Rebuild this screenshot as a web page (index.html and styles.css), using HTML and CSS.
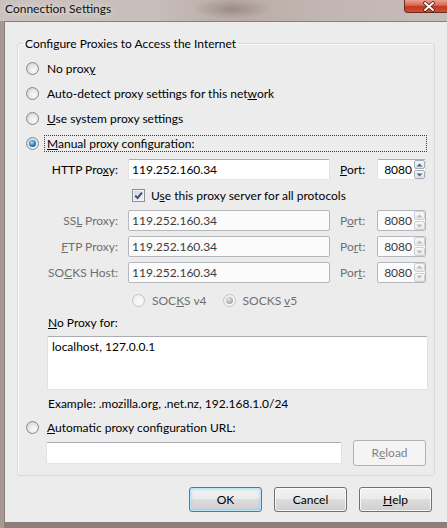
FILE: index.html
```html
<!DOCTYPE html>
<html lang="en">
<head>
<meta charset="utf-8">
<title>Connection Settings</title>
<link rel="stylesheet" href="styles.css">
</head>
<body>
<div class="window">
  <header class="titlebar">
    <span class="title">Connection Settings</span>
    <span class="close" aria-label="Close">
      <svg width="16" height="11" viewBox="0 0 16 11"><path d="M4 2 L12 9 M12 2 L4 9" stroke="#4a2018" stroke-width="3.6" stroke-linecap="round"/><path d="M4 2 L12 9 M12 2 L4 9" stroke="#ffffff" stroke-width="2" stroke-linecap="round"/></svg>
    </span>
  </header>
  <main class="client">
    <fieldset class="group">
      <legend class="legend">Configure Proxies to Access the Internet</legend>
      <div class="options">
        <div class="opt"><span class="radio"></span><span class="opt-label">No prox<u>y</u></span></div>
        <div class="opt"><span class="radio"></span><span class="opt-label">Auto-detect proxy settings for this net<u>w</u>ork</span></div>
        <div class="opt"><span class="radio"></span><span class="opt-label"><u>U</u>se system proxy settings</span></div>
        <div class="opt"><span class="radio on"></span><span class="opt-label focus"><u>M</u>anual proxy configuration:</span></div>
      </div>

      <div class="proxy-grid">
        <span class="field-label">HTTP Pro<u>x</u>y:</span>
        <span class="textbox">119.252.160.34</span>
        <span class="port-label"><u>P</u>ort:</span>
        <span class="portbox"><span class="port-val">8080</span><span class="spin"><span class="spin-btn"><svg width="7" height="4" viewBox="0 0 7 4"><path d="M0.5 3.5 L3.5 0.5 L6.5 3.5 Z" fill="#4f6283"/></svg></span><span class="spin-btn"><svg width="7" height="4" viewBox="0 0 7 4"><path d="M0.5 0.5 L3.5 3.5 L6.5 0.5 Z" fill="#4f6283"/></svg></span></span></span>

        <span class="check-row"><span class="checkbox"><svg width="11" height="11" viewBox="0 0 11 11"><path d="M2.2 5.6 L4.5 8 L9 2.6" fill="none" stroke="#3f4f86" stroke-width="2"/></svg></span><span class="check-label">U<u>s</u>e this proxy server for all protocols</span></span>

        <span class="field-label off">SS<u>L</u> Proxy:</span>
        <span class="textbox off">119.252.160.34</span>
        <span class="port-label off">P<u>o</u>rt:</span>
        <span class="portbox off"><span class="port-val">8080</span><span class="spin"><span class="spin-btn"><svg width="7" height="4" viewBox="0 0 7 4"><path d="M0.5 3.5 L3.5 0.5 L6.5 3.5 Z" fill="#b8bcc2"/></svg></span><span class="spin-btn"><svg width="7" height="4" viewBox="0 0 7 4"><path d="M0.5 0.5 L3.5 3.5 L6.5 0.5 Z" fill="#b8bcc2"/></svg></span></span></span>

        <span class="field-label off"><u>F</u>TP Proxy:</span>
        <span class="textbox off">119.252.160.34</span>
        <span class="port-label off">Po<u>r</u>t:</span>
        <span class="portbox off"><span class="port-val">8080</span><span class="spin"><span class="spin-btn"><svg width="7" height="4" viewBox="0 0 7 4"><path d="M0.5 3.5 L3.5 0.5 L6.5 3.5 Z" fill="#b8bcc2"/></svg></span><span class="spin-btn"><svg width="7" height="4" viewBox="0 0 7 4"><path d="M0.5 0.5 L3.5 3.5 L6.5 0.5 Z" fill="#b8bcc2"/></svg></span></span></span>

        <span class="field-label off">SO<u>C</u>KS Host:</span>
        <span class="textbox off">119.252.160.34</span>
        <span class="port-label off">Por<u>t</u>:</span>
        <span class="portbox off"><span class="port-val">8080</span><span class="spin"><span class="spin-btn"><svg width="7" height="4" viewBox="0 0 7 4"><path d="M0.5 3.5 L3.5 0.5 L6.5 3.5 Z" fill="#b8bcc2"/></svg></span><span class="spin-btn"><svg width="7" height="4" viewBox="0 0 7 4"><path d="M0.5 0.5 L3.5 3.5 L6.5 0.5 Z" fill="#b8bcc2"/></svg></span></span></span>
      </div>

      <div class="socks-ver">
        <span class="radio off"></span><span class="ver-label off">SOC<u>K</u>S v4</span>
        <span class="radio off on v5"></span><span class="ver-label off">SOCKS <u>v</u>5</span>
      </div>

      <div class="noproxy-label"><u>N</u>o Proxy for:</div>
      <div class="textarea">localhost, 127.0.0.1</div>
      <div class="example">Example: .mozilla.org, .net.nz, 192.168.1.0/24</div>

      <div class="opt auto"><span class="radio"></span><span class="opt-label"><u>A</u>utomatic proxy configuration URL:</span></div>
      <div class="url-row">
        <span class="textbox url"></span>
        <span class="btn disabled">R<u>e</u>load</span>
      </div>
    </fieldset>

    <div class="buttons">
      <span class="btn default">OK</span>
      <span class="btn">Cancel</span>
      <span class="btn"><u>H</u>elp</span>
    </div>
  </main>
</div>
</body>
</html>
```

FILE: styles.css
```css
html, body {
  margin: 0;
  padding: 0;
}

body {
  width: 447px;
  height: 528px;
  overflow: hidden;
  background: #8f7e78;
  font-family: Lato, "Liberation Sans", sans-serif;
  font-size: 12px;
  color: #000;
}

u {
  text-decoration-thickness: 1px;
  text-underline-offset: 1px;
}

.window {
  display: flex;
  flex-direction: column;
  height: 528px;
  background: linear-gradient(90deg, #a89893 0, #a89893 4px, transparent 4px);
}

.titlebar {
  height: 21px;
  flex: none;
  display: flex;
  align-items: flex-start;
  background:
    radial-gradient(ellipse 40px 10px at 232px 9px, rgba(120,100,95,0.45), rgba(120,100,95,0) 100%),
    linear-gradient(90deg, #cbc2bf 0%, #c7bdb9 35%, #b9aca7 52%, #c1b5b1 70%, #c8bcb8 100%);
}

.title {
  padding-left: 5px;
  line-height: 17px;
  font-size: 12px;
  color: #111;
  text-shadow: 0 0 6px rgba(255,255,255,0.9);
}

.close {
  margin-left: auto;
  width: 43px;
  height: 13px;
  box-sizing: border-box;
  border: 1px solid #6b2a20;
  border-top: none;
  border-right: none;
  border-radius: 0 0 0 4px;
  background: linear-gradient(#eba092 0%, #d8654f 45%, #c2381f 55%, #cf4e33 100%);
  display: flex;
  align-items: center;
  justify-content: center;
  padding-left: 6px;
}

.close svg {
  display: block;
}

.client {
  margin-left: 4px;
  height: 502px;
  box-sizing: border-box;
  border-top: 1px solid #85807e;
  border-left: 1px solid #85807e;
  border-bottom: 1px solid #85807e;
  background: #ececec;
  display: flex;
  flex-direction: column;
}

.group {
  margin: 14px 0 0 12px;
  padding: 0;
  width: 418px;
  height: 440px;
  box-sizing: border-box;
  border: 1px solid #d3dbe0;
  border-radius: 3px;
  box-shadow: inset 1px 1px 0 #fafafa;
  display: flex;
  flex-direction: column;
}

.legend {
  margin-left: 5px;
  padding: 0 2px;
  line-height: 15px;
  font-size: 12px;
  color: #000;
}

.options {
  padding-top: 5px;
}

.opt {
  height: 25px;
  display: flex;
  align-items: center;
  padding-left: 8px;
}

.opt.auto {
  margin-top: 4px;
}

.radio {
  flex: none;
  width: 13px;
  height: 13px;
  box-sizing: border-box;
  border-radius: 50%;
  border: 1px solid #86888a;
  background: radial-gradient(circle at 62% 65%, #fbfbfb 0, #e8e8e8 45%, #c7c8c9 100%);
  position: relative;
}

.radio.on::after {
  content: "";
  position: absolute;
  left: 2px;
  top: 2px;
  width: 7px;
  height: 7px;
  border-radius: 50%;
  background: radial-gradient(circle at 40% 35%, #b9e2fb 0, #4a9ad8 35%, #1b4f7e 85%);
}

.radio.off {
  border-color: #c3c5c7;
  background: radial-gradient(circle at 62% 65%, #fbfbfb 0, #f2f2f2 60%, #e2e2e2 100%);
}

.radio.off.on::after {
  background: radial-gradient(circle at 40% 35%, #e8e8e8 0, #b7b7b7 50%, #8f8f8f 100%);
}

.opt-label {
  margin-left: 5px;
  padding: 0 2px;
  line-height: 15px;
  border: 1px dotted transparent;
}

.opt-label.focus {
  flex: 1;
  border-color: #3a3a3a;
  margin-right: 7px;
}

.proxy-grid {
  margin: 3px 0 0 22px;
  display: grid;
  grid-template-columns: 78px 202px 27px 49px;
  grid-auto-rows: 21px;
  column-gap: 10px;
  row-gap: 4.7px;
  align-items: center;
}

.field-label {
  text-align: right;
  line-height: 15px;
  white-space: nowrap;
}

.port-label {
  line-height: 15px;
}

.off {
  color: #6f6f6f;
}

.textbox {
  height: 21px;
  box-sizing: border-box;
  border: 1px solid #dfe3e8;
  border-top-color: #abadb3;
  border-radius: 2px;
  background: #ffffff;
  padding: 0 3px;
  line-height: 19px;
  color: #000;
}

.textbox.off {
  border-color: #b4b8bc;
  background: #fbfbfb;
  color: #3c3c3c;
}

.portbox {
  height: 21px;
  box-sizing: border-box;
  border: 1px solid #dfe3e8;
  border-top-color: #abadb3;
  border-radius: 2px;
  background: #ffffff;
  display: flex;
  align-items: stretch;
  color: #000;
}

.portbox.off {
  border-color: #b4b8bc;
  background: #fbfbfb;
  color: #3c3c3c;
}

.port-val {
  flex: 1;
  text-align: right;
  line-height: 19px;
  padding-right: 2px;
}

.spin {
  width: 11px;
  display: flex;
  flex-direction: column;
  gap: 1px;
}

.spin-btn {
  flex: 1;
  box-sizing: border-box;
  border: 1px solid #a3adb9;
  border-radius: 2px;
  background: linear-gradient(#f6f6f6, #dde1e6);
  display: flex;
  align-items: center;
  justify-content: center;
}

.portbox.off .spin-btn {
  border-color: #cdd0d4;
  background: linear-gradient(#f8f8f8, #eaeaea);
}

.spin-btn svg {
  display: block;
}

.check-row {
  grid-column: 2 / 5;
  display: flex;
  align-items: center;
  padding-left: 4px;
}

.checkbox {
  flex: none;
  width: 13px;
  height: 13px;
  box-sizing: border-box;
  border: 1px solid #8e8f8f;
  background: linear-gradient(135deg, #cfd4dc, #f4f6f9);
  box-shadow: inset 0 0 0 1px #f4f4f4;
  display: flex;
  align-items: center;
  justify-content: center;
}

.checkbox svg {
  display: block;
}

.check-label {
  margin-left: 6px;
  line-height: 15px;
  white-space: nowrap;
}

.socks-ver {
  height: 18px;
  margin-top: 9px;
  padding-left: 114px;
  display: flex;
  align-items: center;
}

.ver-label {
  margin-left: 7px;
  line-height: 15px;
}

.radio.v5 {
  margin-left: 16px;
}

.noproxy-label {
  margin-top: 5px;
  padding-left: 30px;
  line-height: 15px;
}

.textarea {
  margin: 6px 0 0 29px;
  width: 381px;
  height: 54px;
  box-sizing: border-box;
  border: 1px solid #dfe3e8;
  border-top-color: #abadb3;
  border-radius: 2px;
  background: #ffffff;
  padding: 2px 4px;
  line-height: 15px;
}

.example {
  margin-top: 6px;
  padding-left: 30px;
  line-height: 15px;
}

.url-row {
  padding-left: 28px;
  display: flex;
  align-items: center;
  height: 26px;
  gap: 11px;
}

.textbox.url {
  width: 296px;
  height: 22px;
}

.btn {
  width: 73px;
  height: 25px;
  box-sizing: border-box;
  border: 1px solid #707070;
  border-radius: 3px;
  background: linear-gradient(#f2f2f2 0%, #ebebeb 50%, #dddddd 50%, #cfcfcf 100%);
  box-shadow: inset 0 0 0 1px rgba(255,255,255,0.75);
  display: flex;
  align-items: center;
  justify-content: center;
  line-height: 15px;
  color: #000;
}

.btn.disabled {
  height: 26px;
  border-color: #adb2b5;
  background: #f4f4f4;
  box-shadow: none;
  color: #838383;
}

.btn.default {
  border-color: #3c7fb1;
  box-shadow: inset 0 0 0 1px #bfe6f8, inset 0 0 2px 2px rgba(120,200,240,0.35);
}

.buttons {
  margin-top: 11px;
  padding-left: 184px;
  display: flex;
  gap: 12px;
}
```
